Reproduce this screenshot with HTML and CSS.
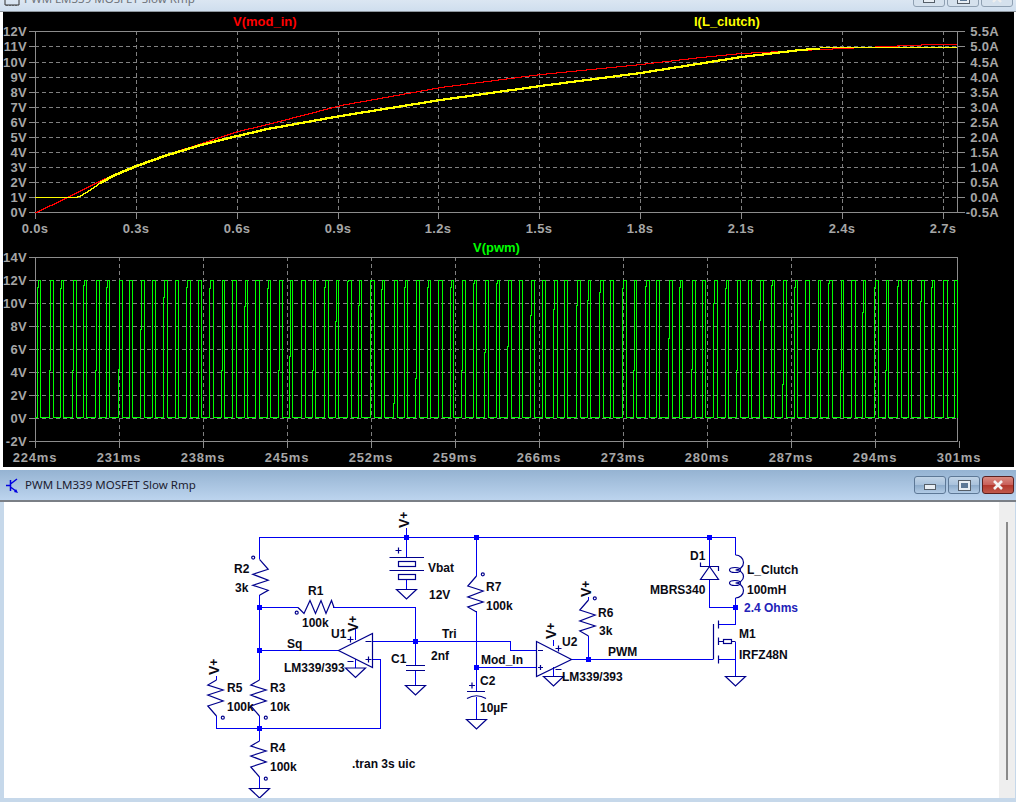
FILE: index.html
```html
<!DOCTYPE html>
<html lang="en">
<head>
    <meta charset="UTF-8">
    <title>PWM LM339 MOSFET Slow Rmp</title>
    <link rel="stylesheet" href="styles.css">
</head>
<body>
    <div class="desktop">
        <div class="window plot-window">
            <div class="titlebar">
                <svg class="title-icon" width="16" height="6" viewBox="0 0 16 6"><path d="M1 0v5h14V0M3 5v1M6 5v1M9 5v1M12 5v1" fill="none" stroke="#333"/></svg>
                <span class="title">PWM LM339 MOSFET Slow Rmp</span>
                <div class="win-buttons">
                    <div class="win-btn"><span class="glyph-min"></span></div>
                    <div class="win-btn"><span class="glyph-max"></span></div>
                    <div class="win-btn"><svg width="14" height="10" viewBox="0 0 14 10"><path d="M3 1l8 8M11 1l-8 8" stroke="#eee" stroke-width="2.4"/></svg></div>
                </div>
            </div>
            <div class="plot-area">
                <svg id="plotTop" class="plot plot-top" viewBox="3 12 1011 224"></svg>
                <svg id="plotBottom" class="plot plot-bottom" viewBox="3 236 1011 231"></svg>
            </div>
        </div>

        <div class="window schematic-window">
            <div class="titlebar">
                <svg class="title-icon" width="13" height="15" viewBox="0 0 13 15"><path d="M4.500 2v11M4.500 6L11 1M4.500 9l6 4.500M0 7.500h4.500" fill="none" stroke="#0000e0" stroke-width="1.500"/><path d="M12 15l-4-1 2-3z" fill="#0000e0"/></svg>
                <span class="title">PWM LM339 MOSFET Slow Rmp</span>
                <div class="win-buttons">
                    <div class="win-btn"><span class="glyph-min"></span></div>
                    <div class="win-btn"><span class="glyph-max"></span></div>
                    <div class="win-btn close"><svg width="14" height="10" viewBox="0 0 14 10"><path d="M3 1l8 8M11 1l-8 8" stroke="#f4f4f4" stroke-width="2.600"/></svg></div>
                </div>
            </div>
            <div class="schematic-body">
                <svg class="schematic" viewBox="4 502 995 296">
                    <defs>
                        <g id="res">
                            <path d="M0 0L8.700 10L-6.700 15L8.700 21L-6.700 26L8.700 31L0 36"/>
                            <circle cx="-6.300" cy="-1.700" r="1.500"/>
                        </g>
                        <path id="gnd" d="M-10 0H10L0 9.500Z"/>
                        <g id="vplus">
                            <text class="label vflag" transform="rotate(-90)" x="0" y="0">V<tspan dy="-1" font-size="12">+</tspan></text>
                        </g>
                    </defs>

                    <!-- wires -->
                    <path class="wire" d="M259.500 559V537.500H735.500V555"/>
                    <path class="wire" d="M259.500 595V680"/>
                    <path class="wire" d="M259.500 607.500H298M333 607.500H415.500V641.500"/>
                    <path class="wire" d="M259.500 650.500H338.500"/>
                    <path class="wire" d="M372.500 641.500H510.500V650.500H536"/>
                    <path class="wire" d="M372.500 659.500H380.500V728.500H216.500V716"/>
                    <path class="wire" d="M259.500 716V741M259.500 777V788"/>
                    <path class="wire" d="M406.500 528V557M406.500 579V589"/>
                    <path class="wire" d="M415.500 641.500V665M415.500 670V685"/>
                    <path class="wire" d="M476.500 537.500V576M476.500 611V691M476.500 697V719"/>
                    <path class="wire" d="M476.500 667.500H536"/>
                    <path class="wire" d="M571.500 659.500H713M588.500 659.500V636M588.500 597V600"/>
                    <path class="wire" d="M709.500 537.500V567M709.500 579V607.500H735.500"/>
                    <path class="wire" d="M735.500 598V624.500H718M718 659.500H735.500V641.500M735.500 659.500V676"/>
                    <path class="wire" d="M216.500 676V680"/>
                    <path class="wire" d="M355.500 628V640M355.500 659V668M553.500 640V646M553.500 667V676"/>

                    <!-- junctions -->
                    <g class="junctions">
                        <rect x="404" y="535" width="5" height="5"/>
                        <rect x="474" y="535" width="5" height="5"/>
                        <rect x="707" y="535" width="5" height="5"/>
                        <rect x="257" y="605" width="5" height="5"/>
                        <rect x="257" y="648" width="5" height="5"/>
                        <rect x="413" y="639" width="5" height="5"/>
                        <rect x="474" y="665" width="5" height="5"/>
                        <rect x="586" y="657" width="5" height="5"/>
                        <rect x="733" y="605" width="5" height="5"/>
                        <rect x="257" y="726" width="5" height="5"/>
                    </g>

                    <!-- components -->
                    <g class="part">
                        <use href="#res" x="0" y="0" transform="translate(259.500 559.300)"/>
                        <use href="#res" transform="translate(259.500 716) rotate(180)"/>
                        <use href="#res" transform="translate(216.500 716) rotate(180)"/>
                        <use href="#res" transform="translate(259.500 777) rotate(180)"/>
                        <use href="#res" transform="translate(476.500 576) scale(-1 1)"/>
                        <use href="#res" transform="translate(588.500 600) scale(-1 1)"/>
                        <path d="M298 607.500L304 613.500L310 600.500L315.500 613.500L321 600.500L326 613.500L331.500 600.500L334 607.500"/>
                        <circle cx="296.700" cy="612.700" r="1.500"/>

                        <use href="#gnd" transform="translate(259.500 788.500)"/>
                        <use href="#gnd" transform="translate(406.500 589.500)"/>
                        <use href="#gnd" transform="translate(415.500 685.500)"/>
                        <use href="#gnd" transform="translate(355.500 668)"/>
                        <use href="#gnd" transform="translate(476.500 719.500)"/>
                        <use href="#gnd" transform="translate(553.500 676.500)"/>
                        <use href="#gnd" transform="translate(735.500 676.500)"/>

                        <path d="M389.500 557.500H424M389.500 570.500H424"/>
                        <rect x="398.500" y="561.500" width="17" height="5"/>
                        <rect x="398.500" y="574.500" width="17" height="5"/>
                        <path d="M395.500 550.500h6M398.500 547.500v6"/>

                        <path d="M406 665.500H425M406 670.500H425"/>

                        <path d="M467 691.500H485M467 698.500Q476.500 693 486 698.500"/>
                        <path d="M469 685.500h6M472 682.500v6"/>

                        <path d="M338.500 650.500L372.500 633.500V667.500Z"/>
                        <path d="M347.500 639.500h6M350.500 636.500v6M347.500 661.500h6M365.500 641.500h6M365.500 659.500h6M368.500 656.500v6"/>

                        <path d="M536.500 641.500L571.500 659.500L536.500 676.500Z"/>
                        <path d="M538 650.500h5M538 667.500h5M540.500 665v5M555.500 648.500h6M558.500 645.500v6M555.500 669.500h6"/>

                        <path d="M700.500 562.500V566.500H718.500V571M709.500 566.500L700.500 579.500H718.500Z"/>

                        <path d="M735.500 555A8 7.500 0 0 1 735.500 570A8 6.500 0 0 1 735.500 583A8 7.500 0 0 1 735.500 598"/>
                        <ellipse cx="735" cy="570" rx="5.500" ry="2.500"/>
                        <ellipse cx="735" cy="583" rx="5.500" ry="2.500"/>

                        <path d="M713.500 624V659.500M718.500 620.500V628.500M718.500 637.500V645M718.500 655.500V663.500M718.500 641.500H723.500M731.500 641.500H735.500"/>
                        <rect x="723.500" y="639.500" width="8" height="4"/>
                    </g>

                    <!-- V+ flags -->
                    <use href="#vplus" transform="translate(409 528)"/>
                    <use href="#vplus" transform="translate(358 632)"/>
                    <use href="#vplus" transform="translate(219 675)"/>
                    <use href="#vplus" transform="translate(556 639)"/>
                    <use href="#vplus" transform="translate(591 597)"/>

                    <!-- labels -->
                    <text class="label" x="234" y="573">R2</text>
                    <text class="label" x="235" y="592">3k</text>
                    <text class="label" x="308" y="595">R1</text>
                    <text class="label" x="302" y="627">100k</text>
                    <text class="label" x="331" y="638">U1</text>
                    <text class="label" x="287" y="648">Sq</text>
                    <text class="label" x="284" y="672">LM339/393</text>
                    <text class="label" x="227" y="692">R5</text>
                    <text class="label" x="227" y="711">100k</text>
                    <text class="label" x="270" y="692">R3</text>
                    <text class="label" x="270" y="711">10k</text>
                    <text class="label" x="270" y="752">R4</text>
                    <text class="label" x="270" y="771">100k</text>
                    <text class="label" x="352" y="768">.tran 3s uic</text>
                    <text class="label" x="428" y="572">Vbat</text>
                    <text class="label" x="429" y="599">12V</text>
                    <text class="label" x="391" y="663">C1</text>
                    <text class="label" x="431" y="660">2nf</text>
                    <text class="label" x="442" y="638">Tri</text>
                    <text class="label" x="486" y="591">R7</text>
                    <text class="label" x="486" y="610">100k</text>
                    <text class="label" x="481" y="664">Mod_In</text>
                    <text class="label" x="480" y="685">C2</text>
                    <text class="label" x="480" y="712">10µF</text>
                    <text class="label" x="562" y="646">U2</text>
                    <text class="label" x="562" y="681">LM339/393</text>
                    <text class="label" x="598" y="617">R6</text>
                    <text class="label" x="599" y="635">3k</text>
                    <text class="label" x="608" y="656">PWM</text>
                    <text class="label" x="690" y="560">D1</text>
                    <text class="label" x="650" y="594">MBRS340</text>
                    <text class="label" x="747" y="574">L_Clutch</text>
                    <text class="label" x="747" y="594">100mH</text>
                    <text class="label spice" x="744" y="612">2.4 Ohms</text>
                    <text class="label" x="739" y="638">M1</text>
                    <text class="label" x="739" y="659">IRFZ48N</text>
                </svg>
                <div class="scrollbar"><div class="thumb"></div></div>
            </div>
        </div>
    </div>
    <script src="plot.js"></script>
</body>
</html>
```

FILE: styles.css
```css
html, body {
    margin: 0;
    background-color: #c6d8ea;
}
.desktop {
    display: flex;
    flex-direction: column;
    width: 1016px;
    height: 802px;
    overflow: hidden;
    font-family: "Noto Sans", "Liberation Sans", sans-serif;
}
.window {
    display: flex;
    flex-direction: column;
}
.plot-window {
    height: 470px;
    background: #fff;
}
.schematic-window {
    flex: 1;
    min-height: 0;
}
.titlebar {
    display: flex;
    align-items: center;
    flex-shrink: 0;
    overflow: hidden;
    font-size: 11.5px;
}
.plot-window .titlebar {
    height: 11px;
    padding-left: 4px;
    background: linear-gradient(#dbe6f2, #cfdeee);
    border-bottom: 1px solid #8f979e;
    color: #6e737a;
    align-items: flex-start;
}
.schematic-window .titlebar {
    height: 30px;
    padding-left: 6px;
    background: linear-gradient(#95b3d2, #bcd4ee);
    border-bottom: 2px solid #7a7f86;
    color: #1c1c30;
}
.title-icon {
    flex-shrink: 0;
}
.title {
    margin-left: 6px;
    white-space: nowrap;
    line-height: 16px;
}
.plot-window .title {
    margin-left: 4px;
    margin-top: -9px;
}
.win-buttons {
    display: flex;
    gap: 2px;
    margin-left: auto;
    margin-right: 2px;
}
.plot-window .win-buttons {
    margin-top: -11px;
    margin-right: 3px;
}
.win-btn {
    display: flex;
    align-items: center;
    justify-content: center;
    box-sizing: border-box;
    width: 32px;
    height: 18px;
    border: 1px solid #5d7896;
    border-radius: 3px;
    background: linear-gradient(#c0d3e6 0, #a9c2dc 48%, #8eaccb 52%, #b2cbe5 100%);
}
.plot-window .win-btn {
    border-color: #8fa0b2;
    background: #d5e1ed;
}
.win-btn.close {
    border-color: #5a2020;
    background: linear-gradient(#d98a80 0, #c9605a 48%, #b3372c 52%, #c0594b 100%);
}
.glyph-min {
    width: 10px;
    height: 4px;
    margin-top: 4px;
    background: #e8eef4;
    border: 1px solid #555e68;
}
.glyph-max {
    box-sizing: border-box;
    width: 11px;
    height: 9px;
    background: #5d7896;
    border: 2px solid #e8eef4;
    outline: 1px solid #555e68;
}
.plot-area {
    display: flex;
    flex-direction: column;
    margin: 0 2px 3px 3px;
    background: #000;
}
.plot {
    display: block;
    width: 1011px;
}
.plot-top {
    height: 224px;
}
.plot-bottom {
    height: 231px;
}
.plot text {
    font-family: "Liberation Sans", Arial, sans-serif;
    font-weight: bold;
    font-size: 13px;
    letter-spacing: 0.3px;
    fill: #a6a6a6;
    dominant-baseline: central;
}
.plot .trace-name {
    letter-spacing: 0;
}
.plot .ms-label {
    letter-spacing: 0.8px;
}
.grid {
    stroke: #808080;
    stroke-dasharray: 4 3;
    shape-rendering: crispEdges;
}
.axis {
    stroke: #8c8c8c;
    fill: none;
    shape-rendering: crispEdges;
}
.trace {
    fill: none;
    shape-rendering: crispEdges;
}
.schematic-body {
    display: flex;
    flex: 1;
    min-height: 0;
    margin: 0 1px 4px 4px;
    background: #fff;
}
.schematic {
    display: block;
    width: 995px;
    height: 296px;
}
.scrollbar {
    display: flex;
    justify-content: center;
    box-sizing: border-box;
    width: 16px;
    padding: 20px 0 18px;
    background: #eeeeee;
}
.thumb {
    width: 2px;
    height: 258px;
    background: #8a8a8a;
}
.wire {
    fill: none;
    stroke: #0000f0;
    shape-rendering: crispEdges;
}
.part {
    fill: none;
    stroke: #00008c;
    stroke-width: 1.2;
}
.junctions rect {
    fill: #0000ff;
}
.label {
    font-family: "Liberation Sans", Arial, sans-serif;
    font-weight: bold;
    font-size: 12px;
    fill: #0a0a14;
    stroke: none;
}
.vflag {
    font-size: 14px;
}
.spice {
    fill: #2222b8;
}
```

FILE: plot.js
```js
const SVG_NS = 'http://www.w3.org/2000/svg';

function add(svg, tag, attrs, text) {
    const el = document.createElementNS(SVG_NS, tag);
    for (const key in attrs) {
        el.setAttribute(key, attrs[key]);
    }
    if (text) {
        el.textContent = text;
    }
    svg.appendChild(el);
    return el;
}

// Grid, ticks and labels of one pane
function drawFrame(svg, opts) {
    const { left, right, top, bottom, xTicks, yTicks, rightTicks, xLabelClass } = opts;
    yTicks.forEach(tick => {
        if (tick.y > top + 1 && tick.y < bottom - 1) {
            add(svg, 'line', { class: 'grid', x1: left, x2: right, y1: tick.y + 0.5, y2: tick.y + 0.5 });
        }
        add(svg, 'line', { class: 'axis', x1: left - 6, x2: left, y1: tick.y + 0.5, y2: tick.y + 0.5 });
        add(svg, 'text', { x: left - 8, y: tick.y, 'text-anchor': 'end' }, tick.label);
    });
    (rightTicks || []).forEach(tick => {
        add(svg, 'line', { class: 'axis', x1: right, x2: right + 8, y1: tick.y + 0.5, y2: tick.y + 0.5 });
        add(svg, 'text', { x: right + 42, y: tick.y, 'text-anchor': 'end' }, tick.label);
    });
    xTicks.forEach(tick => {
        if (tick.x > left + 1 && tick.x < right - 1) {
            add(svg, 'line', { class: 'grid', x1: tick.x + 0.5, x2: tick.x + 0.5, y1: top, y2: bottom });
        }
        add(svg, 'line', { class: 'axis', x1: tick.x + 0.5, x2: tick.x + 0.5, y1: bottom, y2: bottom + 7 });
        add(svg, 'text', { class: xLabelClass || '', x: tick.x, y: bottom + 16, 'text-anchor': 'middle' }, tick.label);
    });
    add(svg, 'rect', { class: 'axis', x: left + 0.5, y: top + 0.5, width: right - left, height: bottom - top });
}

// Turn a few curve points into a stepped path, one pixel at a time
function stepped(points) {
    let d = '';
    let lastY = null;
    for (let i = 0; i < points.length - 1; i++) {
        const [x0, y0] = points[i];
        const [x1, y1] = points[i + 1];
        for (let x = x0; x < x1; x++) {
            const y = Math.round(y0 + (y1 - y0) * (x - x0) / (x1 - x0)) + 0.5;
            d += lastY === null ? `M${x} ${y}` : `H${x}V${y}`;
            lastY = y;
        }
    }
    const end = points[points.length - 1];
    return d + `H${end[0]}`;
}

const redPoints = [[35, 212], [50, 205], [66, 197], [100, 180], [136, 165], [170, 153], [204, 142],
    [237, 131], [267, 124], [340, 105], [440, 87], [540, 74], [640, 64], [700, 57], [741, 53],
    [800, 50], [842, 48], [885, 46], [920, 44.5], [957, 43.5]];
const yellowStart = [[35, 197], [73, 197], [79, 196], [90, 189], [100, 182]];
const yellowPoints = [[100, 182], [112, 175], [136, 165], [167, 154], [204, 143], [237, 135], [267, 128],
    [340, 115], [440, 99], [540, 85], [640, 72], [700, 62.5], [741, 56], [800, 49], [820, 47.5]];
const yellowEnd = [[820, 47], [957, 47]];

const top_ = document.getElementById('plotTop');
const topY = (i) => Math.round(212 - i * 15.05);
const amps = ['-0.5A', '0.0A', '0.5A', '1.0A', '1.5A', '2.0A', '2.5A', '3.0A', '3.5A', '4.0A', '4.5A', '5.0A', '5.5A'];
const topXLabels = ['0.0s', '0.3s', '0.6s', '0.9s', '1.2s', '1.5s', '1.8s', '2.1s', '2.4s', '2.7s'];

drawFrame(top_, {
    left: 35, right: 957, top: 31, bottom: 212,
    yTicks: amps.map((a, i) => ({ y: topY(i), label: i + 'V' })),
    rightTicks: amps.map((a, i) => ({ y: topY(i), label: a })),
    xTicks: topXLabels.map((label, i) => ({ x: Math.round(35 + i * 100.85), label }))
});
add(top_, 'text', { class: 'trace-name', x: 233, y: 21, style: 'fill:#ff0000' }, 'V(mod_in)');
add(top_, 'text', { class: 'trace-name', x: 694, y: 21, style: 'fill:#ffff00' }, 'I(L_clutch)');
add(top_, 'path', { class: 'trace', d: stepped(redPoints), stroke: '#ff0000', 'stroke-width': 1 });
add(top_, 'path', { class: 'trace', d: stepped(yellowStart), stroke: '#ffff00', 'stroke-width': 1 });
add(top_, 'path', { class: 'trace', d: stepped(yellowPoints), stroke: '#ffff00', 'stroke-width': 2 });
add(top_, 'path', { class: 'trace', d: stepped(yellowEnd), stroke: '#ffff00', 'stroke-width': 1 });

// Shoulder voltage on the rising edge of each PWM pulse, read off the trace
const shoulders = [11.4, 4.2, 11.3, 4.2, 11.6, 4.2, 11.4, 4.3, 12, 7.7, 12, 10.5, 12, 11.4, 12, 11.3, 4.2, 12,
    9.7, 12, 11.3, 4.2, 5.4, 12, 4.2, 11.4, 8.4, 11.9, 9.8, 12, 11.2, 1.3, 11.4, 3.5, 11.4, 12, 11.4, 4.2, 11.7,
    5.7, 11.7, 6.3, 12, 9, 12, 9.5, 12, 9.8, 10.3, 11, 12, 11.3, 4.2, 11.5, 12, 7, 11.4, 4.3, 12, 10, 11.3, 4.2,
    12, 8.5, 11.6, 3, 11.4, 12, 6, 11.7, 4.2, 12, 9.2, 11.4, 4.2, 11.5, 12, 10.2, 11.4, 12, 12];

const bottom_ = document.getElementById('plotBottom');
const voltY = (v) => Math.round(418 - v * 11.5);
const volts = [-2, 0, 2, 4, 6, 8, 10, 12, 14];

drawFrame(bottom_, {
    left: 35, right: 957, top: 257, bottom: 441,
    xLabelClass: 'ms-label',
    yTicks: volts.map(v => ({ y: voltY(v), label: v + 'V' })),
    xTicks: Array.from({ length: 12 }, (_, i) => ({ x: 35 + i * 84, label: (224 + i * 7) + 'ms' }))
});
add(bottom_, 'text', { class: 'trace-name', x: 473, y: 247, style: 'fill:#00ff00' }, 'V(pwm)');

let pwm = `M35 ${voltY(0) - 0.5}`;
shoulders.forEach((v, i) => {
    const x = Math.round(37.3 + i * 11.46) + 0.5;
    const width = i % 2 ? 3 : 2;
    pwm += `H${x}V${voltY(v) + 0.5}H${x + 1}V${voltY(12) + 0.5}H${x + 1 + width}V${voltY(0) - 0.5}`;
});
add(bottom_, 'path', { class: 'trace', d: pwm + 'H957', stroke: '#00ff00', 'stroke-width': 1 });
```
